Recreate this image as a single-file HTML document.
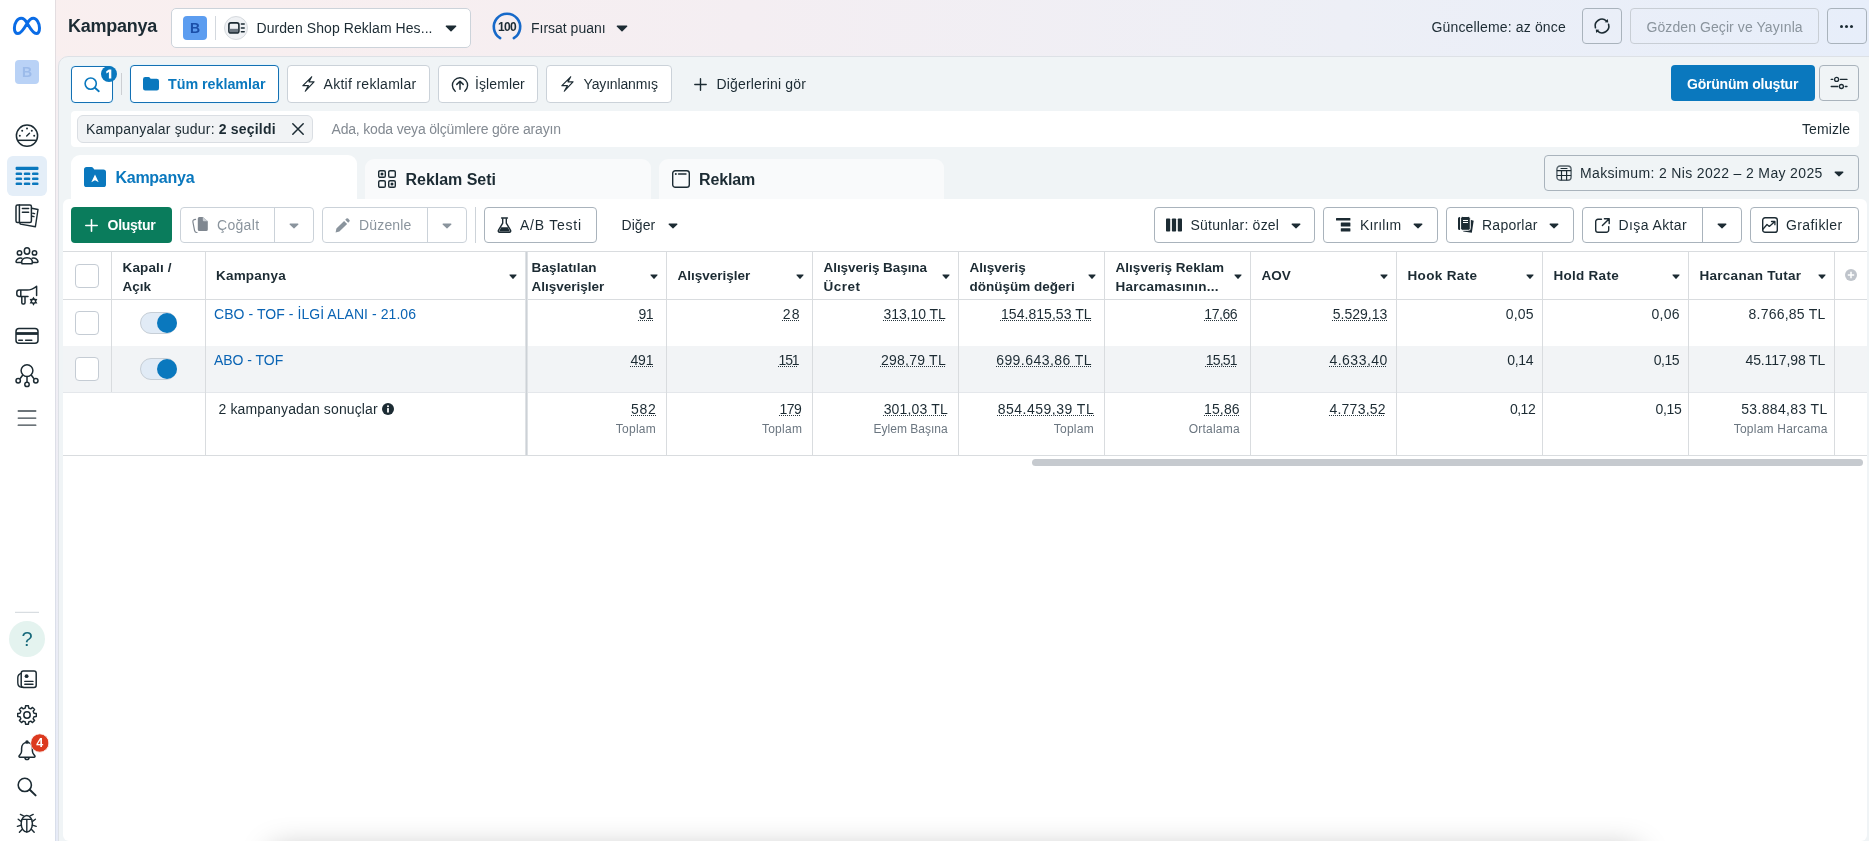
<!DOCTYPE html>
<html lang="tr">
<head>
<meta charset="utf-8">
<title>Kampanya</title>
<style>
*{box-sizing:border-box;margin:0;padding:0}
html,body{width:1869px;height:841px;overflow:hidden}
body{font-family:"Liberation Sans",sans-serif;color:#1c2b33;font-size:14px;position:relative;
background:linear-gradient(90deg,#f9efef 0%,#f8eff0 14%,#f4eef2 40%,#edeff6 72%,#e7eefa 100%)}
.abs{position:absolute}
.t{position:absolute;white-space:nowrap;line-height:1}
.btn{position:absolute;border:1px solid #cbd2d9;border-radius:4px;background:#fff}
svg{position:absolute;overflow:visible}
/* sidebar */
#side{left:0;top:0;width:55px;height:841px;background:#fff}
#sideb{left:55px;top:0;width:1px;height:841px;background:linear-gradient(180deg,#e3dde0,#dcdfe8 60%,#d8deea)}
/* panel */
#panel{left:58px;top:56px;width:1821px;height:800px;background:#f0f4f6;border:1px solid #dde1e6;border-radius:10px 0 0 0}
#card{left:63px;top:199px;width:1804px;height:642px;background:#fff;border-radius:6px}
</style>
</head>
<body>
<div id="w" style="position:absolute;left:0;top:0;width:1869px;height:841px;will-change:transform;overflow:hidden">
<div class="abs" id="side"></div>
<div class="abs" id="sideb"></div>
<div class="abs" style="left:56px;top:56px;width:4px;height:785px;background:linear-gradient(180deg,#f7eff1 0%,#f1eef4 35%,#e7ebf7 100%)"></div>
<div class="abs" id="panel"></div>
<div class="abs" id="card"></div>

<div class="abs" style="left:270px;top:848px;width:1370px;height:40px;border-radius:10px;box-shadow:0 0 30px rgba(0,0,0,.25)"></div>
<!-- TOPBAR -->
<div class="t" id="ttl" style="left:68px;top:17px;font-size:18px;font-weight:bold;color:#1c2b33;letter-spacing:-0.26px">Kampanya</div>
<div class="btn" style="left:171px;top:8px;width:300px;height:40px;border-radius:5px;border-color:#ccd3da"></div>
<div class="abs" style="left:183px;top:16px;width:24px;height:24px;border-radius:4px;background:#5c9df0"></div>
<div class="t" id="tB" style="left:183px;top:21px;width:24px;text-align:center;font-size:14px;font-weight:bold;color:#1b4fa8">B</div>
<div class="abs" style="left:215px;top:16px;width:1px;height:24px;background:#d3d8de"></div>
<div class="abs" style="left:224px;top:16px;width:24px;height:24px;border-radius:12px;background:#eff1f4;border:1px solid #d6dade"></div>
<svg style="left:228px;top:22px" width="17" height="12" viewBox="0 0 17 12"><rect x=".9" y=".9" width="10" height="10" rx="2" fill="none" stroke="#1c2b33" stroke-width="1.6"/><rect x="1.7" y="6.8" width="8.4" height="3.4" fill="#6b7680"/><path d="M13.4 2h2.800M13.4 5.900h2.800M13.4 9.800h2.8" stroke="#1c2b33" stroke-width="1.5" stroke-linecap="round"/></svg>
<div class="t" id="tacc" style="left:256.5px;top:21px;font-size:14px;color:#1c2b33;letter-spacing:0.07px">Durden Shop Reklam Hes...</div>
<svg style="left:445px;top:25px" width="12" height="7" viewBox="0 0 12 7"><path d="M1.2 0.6h9.6a.6.6 0 0 1 .45 1L6.5 6.3a.7.7 0 0 1-1 0L.75 1.6a.6.6 0 0 1 .45-1z" fill="#1c2b33"/></svg>
<svg style="left:492px;top:12px" width="30" height="30" viewBox="0 0 30 30"><path d="M8.2 26.2A13.2 13.2 0 1 1 21.8 26.2" fill="none" stroke="#1669c9" stroke-width="2.6" stroke-linecap="round"/></svg>
<div class="t" id="t100" style="left:492px;top:21px;width:30px;text-align:center;font-size:12px;font-weight:bold;color:#1c2b33;letter-spacing:-0.6px">100</div>
<div class="t" id="tfp" style="left:531px;top:21px;font-size:14px;color:#1c2b33;letter-spacing:-0.01px">Fırsat puanı</div>
<svg style="left:616px;top:25px" width="12" height="7" viewBox="0 0 12 7"><path d="M1.2 0.6h9.6a.6.6 0 0 1 .45 1L6.5 6.3a.7.7 0 0 1-1 0L.75 1.6a.6.6 0 0 1 .45-1z" fill="#1c2b33"/></svg>
<div class="t" id="tupd" style="left:1431.5px;top:19.5px;font-size:14px;color:#1c2b33;letter-spacing:0.15px">Güncelleme: az önce</div>
<div class="btn" style="left:1582px;top:8px;width:40px;height:36px;background:transparent;border-color:#a9b3bc"></div>
<svg style="left:1593.1px;top:16.7px" width="18" height="18" viewBox="0 0 18 18"><path d="M2.43 10.760A6.80 6.80 0 0 1 13.37 3.790M15.57 7.240A6.80 6.80 0 0 1 4.63 14.21" fill="none" stroke="#1c2b33" stroke-width="1.6" stroke-linecap="round"/><path d="M15.20 5.600L14.90 1.90 11.70 5.300zM2.80 12.500L3.10 16.10 6.30 12.700z" fill="#1c2b33"/></svg>
<div class="btn" style="left:1630px;top:8px;width:189px;height:36px;background:transparent;border-color:#c8ced5"></div>
<div class="t" id="tgoz" style="left:1646.5px;top:19.5px;font-size:14px;color:#8a949d;letter-spacing:0.08px">Gözden Geçir ve Yayınla</div>
<div class="btn" style="left:1827px;top:8px;width:40px;height:36px;background:transparent;border-color:#a9b3bc"></div>
<div class="abs" style="left:1840px;top:24.5px;width:3px;height:3px;border-radius:2px;background:#1c2b33;box-shadow:5px 0 0 #1c2b33,10px 0 0 #1c2b33"></div>
<!-- FILTERS -->
<div class="btn" style="left:71px;top:66px;width:42px;height:37px;border:1.3px solid #1470b3;box-shadow:0 0 0 1px #e3f4fc"></div>
<svg style="left:83px;top:75.8px" width="18" height="18" viewBox="0 0 18 18"><circle cx="7.7" cy="7.6" r="5.6" fill="none" stroke="#0a78be" stroke-width="1.6"/><path d="M11.9 11.7L15.8 15.2" stroke="#0a78be" stroke-width="1.9" stroke-linecap="round"/></svg>
<div class="abs" style="left:101px;top:65.8px;width:16px;height:16px;border-radius:8px;background:#0a78be"></div>
<svg style="left:101px;top:65.8px" width="16" height="16" viewBox="0 0 16 16"><path d="M7.9 3.4H10.3V12.6H7.9V5.9L5.3 7.4V5.2Z" fill="#fff"/></svg>
<div class="abs" style="left:121px;top:73px;width:1px;height:22px;background:#cccfd3"></div>
<div class="btn" style="left:130px;top:65px;width:149px;height:38px;border:1.3px solid #1470b3;box-shadow:0 0 0 1px #e3f4fc"></div>
<svg style="left:143px;top:77px" width="16" height="14" viewBox="0 0 16 14"><path d="M0 2.2A2.2 2.2 0 0 1 2.2 0h3.2c.7 0 1.3.3 1.7.9l.5.8h6.2A2.2 2.2 0 0 1 16 3.9v7.4a2.2 2.2 0 0 1-2.2 2.2H2.2A2.2 2.2 0 0 1 0 11.3z" fill="#0a78be"/></svg>
<div class="t" id="ttum" style="left:168px;top:77.2px;font-size:14.3px;font-weight:bold;color:#0a78be;letter-spacing:-0.02px">Tüm reklamlar</div>
<div class="btn" style="left:287px;top:65px;width:143px;height:38px"></div>
<svg style="left:301px;top:76px" width="14" height="16" viewBox="0 0 14 16"><path d="M10.7 .8L1.9 9.7H7.4L4.3 15.2 13 5.8H8z" fill="none" stroke="#1c2b33" stroke-width="1.2" stroke-linejoin="round"/></svg>
<div class="t" id="takt" style="left:323.5px;top:77.3px;font-size:14px;letter-spacing:0.29px">Aktif reklamlar</div>
<div class="btn" style="left:438px;top:65px;width:100px;height:38px"></div>
<svg style="left:451px;top:75.5px" width="18" height="18" viewBox="0 0 18 18"><path d="M4.2 15.2A7.6 7.6 0 1 1 13.8 15.2" fill="none" stroke="#1c2b33" stroke-width="1.4" stroke-linecap="round"/><path d="M9 13.2V5.4M5.8 8.4L9 5.2l3.2 3.2" fill="none" stroke="#1c2b33" stroke-width="1.5" stroke-linecap="round" stroke-linejoin="round"/></svg>
<div class="t" id="tisl" style="left:475px;top:77.3px;font-size:14px;letter-spacing:0.1px">İşlemler</div>
<div class="btn" style="left:546px;top:65px;width:126px;height:38px"></div>
<svg style="left:560px;top:76px" width="14" height="16" viewBox="0 0 14 16"><path d="M10.7 .8L1.9 9.7H7.4L4.3 15.2 13 5.8H8z" fill="none" stroke="#1c2b33" stroke-width="1.2" stroke-linejoin="round"/></svg>
<div class="t" id="tyay" style="left:583.5px;top:77.3px;font-size:14px;letter-spacing:-0.15px">Yayınlanmış</div>
<svg style="left:694px;top:77.7px" width="13" height="13" viewBox="0 0 13 13"><path d="M6.5 0.8v11.4M0.8 6.5h11.4" stroke="#1c2b33" stroke-width="1.4" stroke-linecap="round"/></svg>
<div class="t" id="tdig" style="left:716.5px;top:77.3px;font-size:14px;letter-spacing:0.16px">Diğerlerini gör</div>
<div class="abs" style="left:1671px;top:65px;width:144px;height:36px;border-radius:4px;background:#0a78be"></div>
<div class="t" id="tgor" style="left:1687px;top:76.6px;font-size:14px;font-weight:bold;color:#fff;letter-spacing:-0.21px">Görünüm oluştur</div>
<div class="btn" style="left:1819px;top:65px;width:40px;height:36px;background:transparent;border-color:#a9b3bc"></div>
<svg style="left:1829px;top:73px" width="20" height="20" viewBox="0 0 20 20"><g fill="none" stroke="#1c2b33" stroke-width="1.3" stroke-linecap="round"><path d="M2.2 6.400h1.600M11.4 6.400H18M2.2 13.500H8.800M16.2 13.500H18"/><circle cx="7.6" cy="6.4" r="2"/><circle cx="12.4" cy="13.5" r="2"/></g></svg>
<!-- SEARCH -->
<div class="abs" style="left:71px;top:111px;width:1788px;height:36px;background:#fff;border-radius:4px"></div>
<div class="abs" style="left:77px;top:115px;width:236px;height:28px;background:#f1f3f5;border:1px solid #dadee3;border-radius:6px"></div>
<div class="t" id="tchip" style="left:86px;top:122.3px;font-size:14px;letter-spacing:0.19px">Kampanyalar şudur: <b>2 seçildi</b></div>
<svg style="left:292px;top:123px" width="12" height="12" viewBox="0 0 12 12"><path d="M0.8 0.8l10.4 10.4M11.2 0.8L0.8 11.2" stroke="#1c2b33" stroke-width="1.5" stroke-linecap="round"/></svg>
<div class="t" id="tph" style="left:331.5px;top:122.3px;font-size:14px;color:#838a92;letter-spacing:-0.18px">Ada, koda veya ölçümlere göre arayın</div>
<div class="t" id="ttem" style="left:1802px;top:122.3px;font-size:14px;letter-spacing:0.11px">Temizle</div>
<!-- TABS -->
<div class="abs" style="left:71px;top:155px;width:286px;height:50px;background:#fff;border-radius:9px 9px 0 0"></div>
<div class="abs" style="left:365px;top:159px;width:286px;height:40px;background:#f9fafb;border-radius:9px 9px 0 0"></div>
<div class="abs" style="left:659px;top:159px;width:285px;height:40px;background:#f9fafb;border-radius:9px 9px 0 0"></div>
<svg style="left:84px;top:167px" width="22" height="20" viewBox="0 0 22 20"><path d="M0 2.6A2.6 2.6 0 0 1 2.6 0h4.6c.9 0 1.7.4 2.2 1.2l.9 1.3h9.1A2.6 2.6 0 0 1 22 5.1v12.3a2.6 2.6 0 0 1-2.6 2.6H2.6A2.6 2.6 0 0 1 0 17.400z" fill="#0a78be"/><path d="M11 7.400l3.7 7.8-3.7-1.9-3.7 1.900z" fill="#fff"/></svg>
<div class="t" id="tk1" style="left:115.5px;top:169.8px;font-size:16px;font-weight:bold;color:#0a78be;letter-spacing:-0.27px">Kampanya</div>
<svg style="left:378px;top:170px" width="18" height="18" viewBox="0 0 18 18"><g fill="none" stroke="#1c2b33" stroke-width="1.4"><rect x=".7" y=".7" width="6.6" height="6.6" rx="1.4"/><rect x="10.7" y=".7" width="6.6" height="6.6" rx="1.4"/><rect x=".7" y="10.7" width="6.6" height="6.6" rx="1.4"/><rect x="10.7" y="10.7" width="6.6" height="6.6" rx="1.4"/></g><circle cx="4" cy="4" r="1.5" fill="#1c2b33"/><circle cx="14" cy="14" r="1.5" fill="#1c2b33"/></svg>
<div class="t" id="tk2" style="left:405.5px;top:171.8px;font-size:16px;font-weight:bold;letter-spacing:-0.03px">Reklam Seti</div>
<svg style="left:672px;top:170px" width="18" height="18" viewBox="0 0 18 18"><rect x=".7" y=".7" width="16.6" height="16.6" rx="2.6" fill="none" stroke="#1c2b33" stroke-width="1.4"/><circle cx="3.8" cy="4" r="1" fill="#1c2b33"/><path d="M6.5 4h7.5" stroke="#1c2b33" stroke-width="1.4" stroke-linecap="round"/></svg>
<div class="t" id="tk3" style="left:699px;top:171.8px;font-size:16px;font-weight:bold;letter-spacing:-0.14px">Reklam</div>
<div class="btn" style="left:1544px;top:155px;width:315px;height:36px;background:transparent;border-color:#a9b3bc"></div>
<svg style="left:1556px;top:165px" width="16" height="16" viewBox="0 0 16 16"><rect x=".9" y="1" width="14.2" height="14.2" rx="3.2" fill="none" stroke="#55626a" stroke-width="1.4"/><path d="M5 3.500h6" stroke="#1c2b33" stroke-width="1.2" stroke-linecap="round"/><path d="M.9 5.600h14.200M.9 10.500h14.200M5.5 5.600v9.600M10.6 5.600v9.6" stroke="#1c2b33" stroke-width="1.2"/></svg>
<div class="t" id="tdate" style="left:1580px;top:166.2px;font-size:14px;letter-spacing:0.35px">Maksimum: 2 Nis 2022 – 2 May 2025</div>
<svg style="left:1834px;top:170.5px" width="10" height="6" viewBox="0 0 12 7"><path d="M1.2 0.6h9.6a.6.6 0 0 1 .45 1L6.5 6.3a.7.7 0 0 1-1 0L.75 1.6a.6.6 0 0 1 .45-1z" fill="#1c2b33"/></svg>
<!-- TOOLBAR -->
<div class="abs" style="left:71px;top:207px;width:101px;height:36px;border-radius:4px;background:#0a7c5c"></div>
<svg style="left:85px;top:219px" width="13" height="13" viewBox="0 0 13 13"><path d="M6.5 0.8v11.400M0.8 6.5h11.4" stroke="#fff" stroke-width="1.6" stroke-linecap="round"/></svg>
<div class="t" id="tol" style="left:107.5px;top:218px;font-size:14px;font-weight:bold;color:#fff;letter-spacing:-0.25px">Oluştur</div>
<div class="btn" style="left:180px;top:207px;width:134px;height:36px"></div>
<div class="abs" style="left:274px;top:208px;width:1px;height:34px;background:#cbd2d9"></div>
<svg style="left:192px;top:217px" width="17" height="16" viewBox="0 0 17 16"><path d="M7.3 0h3.500L15.8 4.200V12.400a1.5 1.5 0 0 1-1.5 1.500H7.300a1.5 1.5 0 0 1-1.5-1.500V1.500A1.5 1.5 0 0 1 7.3 0z" fill="#7f8790"/><path d="M10.8 0L15.8 4.200H11.800a1 1 0 0 1-1-1z" fill="#c9ced3"/><path d="M3.6 2.400C1.6 2.6.6 3.4.9 5l1.7 8.600c.3 1.4 1.2 2 2.4 1.9" fill="none" stroke="#7f8790" stroke-width="1.2" stroke-linecap="round"/></svg>
<div class="t" id="tcog" style="left:217px;top:218px;font-size:14px;color:#8a949d;letter-spacing:0.31px">Çoğalt</div>
<svg style="left:289px;top:222.5px" width="10" height="6" viewBox="0 0 12 7"><path d="M1.2 0.6h9.6a.6.6 0 0 1 .45 1L6.5 6.3a.7.7 0 0 1-1 0L.75 1.6a.6.6 0 0 1 .45-1z" fill="#8a949d"/></svg>
<div class="btn" style="left:322px;top:207px;width:145px;height:36px"></div>
<div class="abs" style="left:427px;top:208px;width:1px;height:34px;background:#cbd2d9"></div>
<svg style="left:335px;top:218px" width="15" height="15" viewBox="0 0 15 15"><path d="M0.6 14.400l.8-3.8 7.7-7.7 3 3-7.7 7.700zM10.2 1.800l1.2-1.200a1.2 1.2 0 0 1 1.7 0l1.3 1.300a1.2 1.2 0 0 1 0 1.700l-1.2 1.200z" fill="#8a949d"/></svg>
<div class="t" id="tduz" style="left:359px;top:218px;font-size:14px;color:#8a949d;letter-spacing:0.17px">Düzenle</div>
<svg style="left:442px;top:222.5px" width="10" height="6" viewBox="0 0 12 7"><path d="M1.2 0.6h9.6a.6.6 0 0 1 .45 1L6.5 6.3a.7.7 0 0 1-1 0L.75 1.6a.6.6 0 0 1 .45-1z" fill="#8a949d"/></svg>
<div class="abs" style="left:475px;top:207px;width:1px;height:36px;background:#cdd3d9"></div>
<div class="btn" style="left:484px;top:207px;width:113px;height:36px;border-color:#a9b3bc"></div>
<svg style="left:497px;top:217px" width="15" height="16" viewBox="0 0 15 16"><path d="M4.6 1h5.8" stroke="#1c2b33" stroke-width="1.5" stroke-linecap="round"/><path d="M5.7 1.200v5L1.4 13.400A1.3 1.3 0 0 0 2.5 15.300h10a1.3 1.3 0 0 0 1.1-1.900L9.3 6.200v-5" fill="none" stroke="#1c2b33" stroke-width="1.4" stroke-linejoin="round"/><path d="M4.2 10.200h6.600l2.2 4.300H2z" fill="#1c2b33"/></svg>
<div class="t" id="tab" style="left:520px;top:218px;font-size:14px;letter-spacing:0.75px">A/B Testi</div>
<div class="t" id="tdgr" style="left:621.5px;top:218px;font-size:14px;letter-spacing:0.06px">Diğer</div>
<svg style="left:667.5px;top:222.5px" width="10" height="6" viewBox="0 0 12 7"><path d="M1.2 0.6h9.6a.6.6 0 0 1 .45 1L6.5 6.3a.7.7 0 0 1-1 0L.75 1.6a.6.6 0 0 1 .45-1z" fill="#1c2b33"/></svg>
<div class="btn" style="left:1154px;top:207px;width:161px;height:36px;border-color:#a9b3bc"></div>
<svg style="left:1166px;top:218px" width="16" height="14" viewBox="0 0 16 14"><rect x="0" y="0.5" width="4.2" height="13" rx=".8" fill="#1c2b33"/><rect x="5.9" y="0.5" width="4.2" height="13" rx=".8" fill="#1c2b33"/><rect x="11.8" y="0.5" width="4.2" height="13" rx=".8" fill="#1c2b33"/></svg>
<div class="t" id="tsut" style="left:1190.5px;top:218px;font-size:14px;letter-spacing:0.22px">Sütunlar: özel</div>
<svg style="left:1290.5px;top:222.5px" width="10" height="6" viewBox="0 0 12 7"><path d="M1.2 0.6h9.6a.6.6 0 0 1 .45 1L6.5 6.3a.7.7 0 0 1-1 0L.75 1.6a.6.6 0 0 1 .45-1z" fill="#1c2b33"/></svg>
<div class="btn" style="left:1323px;top:207px;width:115px;height:36px;border-color:#a9b3bc"></div>
<svg style="left:1336px;top:218.3px" width="15" height="14" viewBox="0 0 15 14"><rect x="0" y="0" width="14.4" height="2.6" rx=".5" fill="#1c2b33"/><rect x="4.8" y="4.4" width="9.6" height="4.2" rx=".5" fill="#1c2b33"/><rect x="4.8" y="10.2" width="9.6" height="3.3" rx=".5" fill="#1c2b33"/></svg>
<div class="t" id="tkir" style="left:1360px;top:218px;font-size:14px;letter-spacing:0.12px">Kırılım</div>
<svg style="left:1413px;top:222.5px" width="10" height="6" viewBox="0 0 12 7"><path d="M1.2 0.6h9.6a.6.6 0 0 1 .45 1L6.5 6.3a.7.7 0 0 1-1 0L.75 1.6a.6.6 0 0 1 .45-1z" fill="#1c2b33"/></svg>
<div class="btn" style="left:1446px;top:207px;width:128px;height:36px;border-color:#a9b3bc"></div>
<svg style="left:1458px;top:217px" width="16" height="16" viewBox="0 0 16 16"><path d="M12.4 2.800L15.7 3.7 13.8 15.8 5.2 14.4 5.6 11z" fill="#1c2b33"/><rect x="2.6" y="-.5" width="9.7" height="13.8" rx="1.8" fill="#1c2b33" stroke="#fff" stroke-width="1"/><path d="M2 0v13H1.600A1.6 1.6 0 0 1 0 11.400V1.600A1.6 1.6 0 0 1 1.6 0z" fill="#1c2b33"/><path d="M5 3.500h5M5 5.500h5" stroke="#fff" stroke-width="1"/></svg>
<div class="t" id="trap" style="left:1482px;top:218px;font-size:14px;letter-spacing:0.24px">Raporlar</div>
<svg style="left:1549px;top:222.5px" width="10" height="6" viewBox="0 0 12 7"><path d="M1.2 0.6h9.6a.6.6 0 0 1 .45 1L6.5 6.3a.7.7 0 0 1-1 0L.75 1.6a.6.6 0 0 1 .45-1z" fill="#1c2b33"/></svg>
<div class="btn" style="left:1582px;top:207px;width:160px;height:36px;border-color:#a9b3bc"></div>
<div class="abs" style="left:1702px;top:208px;width:1px;height:34px;background:#a9b3bc"></div>
<svg style="left:1595px;top:218px" width="15" height="15" viewBox="0 0 15 15"><path d="M6.5 1.300H3A2.3 2.3 0 0 0 .7 3.600V12A2.3 2.3 0 0 0 3 14.300h8.400a2.3 2.3 0 0 0 2.3-2.300V8.6" fill="none" stroke="#1c2b33" stroke-width="1.4" stroke-linecap="round"/><path d="M9.4.8h4.800v4.800M14 1L7.4 7.6" fill="none" stroke="#1c2b33" stroke-width="1.4" stroke-linecap="round" stroke-linejoin="round"/></svg>
<div class="t" id="tdis" style="left:1618.5px;top:218px;font-size:14px;letter-spacing:0.4px">Dışa Aktar</div>
<svg style="left:1717px;top:222.5px" width="10" height="6" viewBox="0 0 12 7"><path d="M1.2 0.6h9.6a.6.6 0 0 1 .45 1L6.5 6.3a.7.7 0 0 1-1 0L.75 1.6a.6.6 0 0 1 .45-1z" fill="#1c2b33"/></svg>
<div class="btn" style="left:1750px;top:207px;width:109px;height:36px;border-color:#a9b3bc"></div>
<svg style="left:1762px;top:217px" width="16" height="16" viewBox="0 0 16 16"><rect x=".7" y=".7" width="14.6" height="14.6" rx="2.4" fill="none" stroke="#1c2b33" stroke-width="1.4"/><path d="M.9 12.200L5 7.5 7.3 9.4 12.6 4.800M9.5 4.500h3.400v3.2" fill="none" stroke="#1c2b33" stroke-width="1.3" stroke-linecap="round" stroke-linejoin="round"/></svg>
<div class="t" id="tgra" style="left:1786px;top:218px;font-size:14px;letter-spacing:0.41px">Grafikler</div>
<!-- TABLE -->
<div class="abs" style="left:63px;top:346px;width:1804px;height:47px;background:#f2f4f6"></div>
<div class="abs" style="left:63px;top:251px;width:1804px;height:1px;background:#d9dcdf"></div>
<div class="abs" style="left:63px;top:299px;width:1804px;height:1px;background:#d9dcdf"></div>
<div class="abs" style="left:63px;top:455px;width:1804px;height:1px;background:#d9dcdf"></div>
<div class="abs" style="left:63px;top:392px;width:1804px;height:1px;background:#e4e7eb"></div>
<div class="abs" style="left:111px;top:252px;width:1px;height:140px;background:#d9dcdf"></div>
<div class="abs" style="left:205px;top:252px;width:1px;height:203px;background:#d9dcdf"></div>
<div class="abs" style="left:525px;top:252px;width:3px;height:203px;background:linear-gradient(90deg,#eceef0,#ccd1d6 40%,#ccd1d6 60%,#eceef0)"></div>
<div class="abs" style="left:666px;top:252px;width:1px;height:203px;background:#d9dcdf"></div>
<div class="abs" style="left:812px;top:252px;width:1px;height:203px;background:#d9dcdf"></div>
<div class="abs" style="left:958px;top:252px;width:1px;height:203px;background:#d9dcdf"></div>
<div class="abs" style="left:1104px;top:252px;width:1px;height:203px;background:#d9dcdf"></div>
<div class="abs" style="left:1250px;top:252px;width:1px;height:203px;background:#d9dcdf"></div>
<div class="abs" style="left:1396px;top:252px;width:1px;height:203px;background:#d9dcdf"></div>
<div class="abs" style="left:1542px;top:252px;width:1px;height:203px;background:#d9dcdf"></div>
<div class="abs" style="left:1688px;top:252px;width:1px;height:203px;background:#d9dcdf"></div>
<div class="abs" style="left:1834px;top:252px;width:1px;height:203px;background:#d9dcdf"></div>
<div class="abs" style="left:75px;top:264px;width:24px;height:24px;border:1px solid #c5ccd4;border-radius:4px;background:#fff"></div>
<div class="abs" style="left:75px;top:311px;width:24px;height:24px;border:1px solid #c5ccd4;border-radius:4px;background:#fff"></div>
<div class="abs" style="left:75px;top:357px;width:24px;height:24px;border:1px solid #c5ccd4;border-radius:4px;background:#fff"></div>
<div class="abs" style="left:140px;top:312px;width:37px;height:22px;border-radius:11px;background:#e1ebf6;border:1px solid #c6ced6"></div>
<div class="abs" style="left:157px;top:313px;width:20px;height:20px;border-radius:10px;background:#0a78be"></div>
<div class="abs" style="left:140px;top:358px;width:37px;height:22px;border-radius:11px;background:#e1ebf6;border:1px solid #c6ced6"></div>
<div class="abs" style="left:157px;top:359px;width:20px;height:20px;border-radius:10px;background:#0a78be"></div>
<div class="t" id="h0a" style="left:122.5px;top:260.8px;font-size:13.5px;font-weight:bold;letter-spacing:0.14px">Kapalı /</div>
<div class="t" id="h0b" style="left:122.5px;top:279.5px;font-size:13.5px;font-weight:bold">Açık</div>
<div class="t" id="h1" style="left:216px;top:269.2px;font-size:13.5px;font-weight:bold;letter-spacing:0.2px">Kampanya</div>
<svg style="left:509px;top:274px" width="8" height="5.4" viewBox="0 0 12 7" preserveAspectRatio="none"><path d="M1.2 0.6h9.6a.6.6 0 0 1 .45 1L6.5 6.3a.7.7 0 0 1-1 0L.75 1.6a.6.6 0 0 1 .45-1z" fill="#1c2b33"/></svg>
<div class="t" id="c0a" style="left:531.5px;top:260.8px;font-size:13.5px;font-weight:bold;letter-spacing:0.14px">Başlatılan</div>
<div class="t" id="c0b" style="left:531.5px;top:279.5px;font-size:13.5px;font-weight:bold;letter-spacing:-0.01px">Alışverişler</div>
<svg style="left:649.5px;top:274px" width="8" height="5.4" viewBox="0 0 12 7" preserveAspectRatio="none"><path d="M1.2 0.6h9.6a.6.6 0 0 1 .45 1L6.5 6.3a.7.7 0 0 1-1 0L.75 1.6a.6.6 0 0 1 .45-1z" fill="#1c2b33"/></svg>
<div class="t" id="c1a" style="left:677.5px;top:269.2px;font-size:13.5px;font-weight:bold;letter-spacing:-0.01px">Alışverişler</div>
<svg style="left:795.5px;top:274px" width="8" height="5.4" viewBox="0 0 12 7" preserveAspectRatio="none"><path d="M1.2 0.6h9.6a.6.6 0 0 1 .45 1L6.5 6.3a.7.7 0 0 1-1 0L.75 1.6a.6.6 0 0 1 .45-1z" fill="#1c2b33"/></svg>
<div class="t" id="c2a" style="left:823.5px;top:260.8px;font-size:13.5px;font-weight:bold;letter-spacing:-0.05px">Alışveriş Başına</div>
<div class="t" id="c2b" style="left:823.5px;top:279.5px;font-size:13.5px;font-weight:bold;letter-spacing:0.52px">Ücret</div>
<svg style="left:941.5px;top:274px" width="8" height="5.4" viewBox="0 0 12 7" preserveAspectRatio="none"><path d="M1.2 0.6h9.6a.6.6 0 0 1 .45 1L6.5 6.3a.7.7 0 0 1-1 0L.75 1.6a.6.6 0 0 1 .45-1z" fill="#1c2b33"/></svg>
<div class="t" id="c3a" style="left:969.5px;top:260.8px;font-size:13.5px;font-weight:bold;letter-spacing:-0.01px">Alışveriş</div>
<div class="t" id="c3b" style="left:969.5px;top:279.5px;font-size:13.5px;font-weight:bold;letter-spacing:0.01px">dönüşüm değeri</div>
<svg style="left:1087.5px;top:274px" width="8" height="5.4" viewBox="0 0 12 7" preserveAspectRatio="none"><path d="M1.2 0.6h9.6a.6.6 0 0 1 .45 1L6.5 6.3a.7.7 0 0 1-1 0L.75 1.6a.6.6 0 0 1 .45-1z" fill="#1c2b33"/></svg>
<div class="t" id="c4a" style="left:1115.5px;top:260.8px;font-size:13.5px;font-weight:bold;letter-spacing:0.03px">Alışveriş Reklam</div>
<div class="t" id="c4b" style="left:1115.5px;top:279.5px;font-size:13.5px;font-weight:bold;letter-spacing:0.23px">Harcamasının...</div>
<svg style="left:1233.5px;top:274px" width="8" height="5.4" viewBox="0 0 12 7" preserveAspectRatio="none"><path d="M1.2 0.6h9.6a.6.6 0 0 1 .45 1L6.5 6.3a.7.7 0 0 1-1 0L.75 1.6a.6.6 0 0 1 .45-1z" fill="#1c2b33"/></svg>
<div class="t" id="c5a" style="left:1261.5px;top:269.2px;font-size:13.5px;font-weight:bold;letter-spacing:-0.03px">AOV</div>
<svg style="left:1379.5px;top:274px" width="8" height="5.4" viewBox="0 0 12 7" preserveAspectRatio="none"><path d="M1.2 0.6h9.6a.6.6 0 0 1 .45 1L6.5 6.3a.7.7 0 0 1-1 0L.75 1.6a.6.6 0 0 1 .45-1z" fill="#1c2b33"/></svg>
<div class="t" id="c6a" style="left:1407.5px;top:269.2px;font-size:13.5px;font-weight:bold;letter-spacing:0.35px">Hook Rate</div>
<svg style="left:1525.5px;top:274px" width="8" height="5.4" viewBox="0 0 12 7" preserveAspectRatio="none"><path d="M1.2 0.6h9.6a.6.6 0 0 1 .45 1L6.5 6.3a.7.7 0 0 1-1 0L.75 1.6a.6.6 0 0 1 .45-1z" fill="#1c2b33"/></svg>
<div class="t" id="c7a" style="left:1553.5px;top:269.2px;font-size:13.5px;font-weight:bold;letter-spacing:0.27px">Hold Rate</div>
<svg style="left:1671.5px;top:274px" width="8" height="5.4" viewBox="0 0 12 7" preserveAspectRatio="none"><path d="M1.2 0.6h9.6a.6.6 0 0 1 .45 1L6.5 6.3a.7.7 0 0 1-1 0L.75 1.6a.6.6 0 0 1 .45-1z" fill="#1c2b33"/></svg>
<div class="t" id="c8a" style="left:1699.5px;top:269.2px;font-size:13.5px;font-weight:bold;letter-spacing:0.27px">Harcanan Tutar</div>
<svg style="left:1817.5px;top:274px" width="8" height="5.4" viewBox="0 0 12 7" preserveAspectRatio="none"><path d="M1.2 0.6h9.6a.6.6 0 0 1 .45 1L6.5 6.3a.7.7 0 0 1-1 0L.75 1.6a.6.6 0 0 1 .45-1z" fill="#1c2b33"/></svg>
<svg style="left:1845px;top:269.2px" width="12" height="12" viewBox="0 0 12 12"><circle cx="6" cy="6" r="6" fill="#bfc4cb"/><path d="M6 2.8v6.400M2.8 6h6.4" stroke="#fff" stroke-width="1.5"/></svg>
<div class="t" id="n1" style="left:214px;top:307.3px;font-size:14px;color:#0a64b4;letter-spacing:0.06px">CBO - TOF - İLGİ ALANI - 21.06</div>
<div class="t" id="n2" style="left:214px;top:353.4px;font-size:14px;color:#0a64b4;letter-spacing:-0.03px">ABO - TOF</div>
<div class="t" id="n3" style="left:218.5px;top:402.1px;font-size:14px;letter-spacing:0.13px">2 kampanyadan sonuçlar</div>
<svg style="left:382px;top:403px" width="12" height="12" viewBox="0 0 12 12"><circle cx="6" cy="6" r="6" fill="#1c2b33"/><circle cx="6" cy="3.3" r="1" fill="#fff"/><rect x="5.1" y="5.1" width="1.8" height="4.4" fill="#fff"/></svg>
<div class="t" id="v0a" style="right:1215.4px;top:307.3px;font-size:14px;text-decoration:underline dotted #27353d;text-decoration-thickness:1.25px;text-underline-offset:1.2px;letter-spacing:-0.58px;margin-right:0.58px">91</div>
<div class="t" id="v0b" style="right:1215.4px;top:353.4px;font-size:14px;text-decoration:underline dotted #27353d;text-decoration-thickness:1.25px;text-underline-offset:1.2px;letter-spacing:-0.08px;margin-right:0.08px">491</div>
<div class="t" id="v0c" style="right:1213.2px;top:402.1px;font-size:14px;text-decoration:underline dotted #27353d;text-decoration-thickness:1.25px;text-underline-offset:1.2px;letter-spacing:0.67px;margin-right:-0.67px">582</div>
<div class="t" id="v0d" style="right:1213.2px;top:422.6px;font-size:12px;color:#6b7680;letter-spacing:0.26px;margin-right:-0.26px">Toplam</div>
<div class="t" id="v1a" style="right:1069.4px;top:307.3px;font-size:14px;text-decoration:underline dotted #27353d;text-decoration-thickness:1.25px;text-underline-offset:1.2px;letter-spacing:1.32px;margin-right:-1.32px">28</div>
<div class="t" id="v1b" style="right:1069.4px;top:353.4px;font-size:14px;text-decoration:underline dotted #27353d;text-decoration-thickness:1.25px;text-underline-offset:1.2px;letter-spacing:-1.18px;margin-right:1.18px">151</div>
<div class="t" id="v1c" style="right:1067.1px;top:402.1px;font-size:14px;text-decoration:underline dotted #27353d;text-decoration-thickness:1.25px;text-underline-offset:1.2px;letter-spacing:-0.43px;margin-right:0.43px">179</div>
<div class="t" id="v1d" style="right:1067.1px;top:422.6px;font-size:12px;color:#6b7680;letter-spacing:0.26px;margin-right:-0.26px">Toplam</div>
<div class="t" id="v2a" style="right:923.3px;top:307.3px;font-size:14px;text-decoration:underline dotted #27353d;text-decoration-thickness:1.25px;text-underline-offset:1.2px;letter-spacing:-0.07px;margin-right:0.07px">313,10 TL</div>
<div class="t" id="v2b" style="right:923.3px;top:353.4px;font-size:14px;text-decoration:underline dotted #27353d;text-decoration-thickness:1.25px;text-underline-offset:1.2px;letter-spacing:0.25px;margin-right:-0.25px">298,79 TL</div>
<div class="t" id="v2c" style="right:921.3px;top:402.1px;font-size:14px;text-decoration:underline dotted #27353d;text-decoration-thickness:1.25px;text-underline-offset:1.2px;letter-spacing:0.15px;margin-right:-0.15px">301,03 TL</div>
<div class="t" id="v2d" style="right:921.3px;top:422.6px;font-size:12px;color:#6b7680;letter-spacing:0.01px;margin-right:-0.01px">Eylem Başına</div>
<div class="t" id="v3a" style="right:777.4px;top:307.3px;font-size:14px;text-decoration:underline dotted #27353d;text-decoration-thickness:1.25px;text-underline-offset:1.2px;letter-spacing:0.05px;margin-right:-0.05px">154.815,53 TL</div>
<div class="t" id="v3b" style="right:777.4px;top:353.4px;font-size:14px;text-decoration:underline dotted #27353d;text-decoration-thickness:1.25px;text-underline-offset:1.2px;letter-spacing:0.45px;margin-right:-0.45px">699.643,86 TL</div>
<div class="t" id="v3c" style="right:775.3px;top:402.1px;font-size:14px;text-decoration:underline dotted #27353d;text-decoration-thickness:1.25px;text-underline-offset:1.2px;letter-spacing:0.49px;margin-right:-0.49px">854.459,39 TL</div>
<div class="t" id="v3d" style="right:775.3px;top:422.6px;font-size:12px;color:#6b7680;letter-spacing:0.26px;margin-right:-0.26px">Toplam</div>
<div class="t" id="v4a" style="right:631.4px;top:307.3px;font-size:14px;text-decoration:underline dotted #27353d;text-decoration-thickness:1.25px;text-underline-offset:1.2px;letter-spacing:-0.44px;margin-right:0.44px">17,66</div>
<div class="t" id="v4b" style="right:631.4px;top:353.4px;font-size:14px;text-decoration:underline dotted #27353d;text-decoration-thickness:1.25px;text-underline-offset:1.2px;letter-spacing:-0.81px;margin-right:0.81px">15,51</div>
<div class="t" id="v4c" style="right:629.4px;top:402.1px;font-size:14px;text-decoration:underline dotted #27353d;text-decoration-thickness:1.25px;text-underline-offset:1.2px;letter-spacing:0.14px;margin-right:-0.14px">15,86</div>
<div class="t" id="v4d" style="right:629.4px;top:422.6px;font-size:12px;color:#6b7680;letter-spacing:0.22px;margin-right:-0.22px">Ortalama</div>
<div class="t" id="v5a" style="right:481.6px;top:307.3px;font-size:14px;text-decoration:underline dotted #27353d;text-decoration-thickness:1.25px;text-underline-offset:1.2px;letter-spacing:0.03px;margin-right:-0.03px">5.529,13</div>
<div class="t" id="v5b" style="right:481.6px;top:353.4px;font-size:14px;text-decoration:underline dotted #27353d;text-decoration-thickness:1.25px;text-underline-offset:1.2px;letter-spacing:0.5px;margin-right:-0.5px">4.633,40</div>
<div class="t" id="v5c" style="right:483.4px;top:402.1px;font-size:14px;text-decoration:underline dotted #27353d;text-decoration-thickness:1.25px;text-underline-offset:1.2px;letter-spacing:0.24px;margin-right:-0.24px">4.773,52</div>
<div class="t" id="v6a" style="right:335.5px;top:307.3px;font-size:14px;letter-spacing:0.15px;margin-right:-0.15px">0,05</div>
<div class="t" id="v6b" style="right:335.5px;top:353.4px;font-size:14px;letter-spacing:-0.35px;margin-right:0.35px">0,14</div>
<div class="t" id="v6c" style="right:333.3px;top:402.1px;font-size:14px;letter-spacing:-0.48px;margin-right:0.48px">0,12</div>
<div class="t" id="v7a" style="right:189.5px;top:307.3px;font-size:14px;letter-spacing:0.28px;margin-right:-0.28px">0,06</div>
<div class="t" id="v7b" style="right:189.5px;top:353.4px;font-size:14px;letter-spacing:-0.48px;margin-right:0.48px">0,15</div>
<div class="t" id="v7c" style="right:187.3px;top:402.1px;font-size:14px;letter-spacing:-0.35px;margin-right:0.35px">0,15</div>
<div class="t" id="v8a" style="right:43.7px;top:307.3px;font-size:14px;letter-spacing:0.23px;margin-right:-0.23px">8.766,85 TL</div>
<div class="t" id="v8b" style="right:43.7px;top:353.4px;font-size:14px;letter-spacing:-0.13px;margin-right:0.13px">45.117,98 TL</div>
<div class="t" id="v8c" style="right:41.7px;top:402.1px;font-size:14px;letter-spacing:0.35px;margin-right:-0.35px">53.884,83 TL</div>
<div class="t" id="v8d" style="right:41.7px;top:422.6px;font-size:12px;color:#6b7680;letter-spacing:0.22px;margin-right:-0.22px">Toplam Harcama</div>
<div class="abs" style="left:1032px;top:459px;width:831px;height:7px;border-radius:4px;background:#c6cacf"></div>
<!-- SIDEBAR ICONS -->
<div class="abs" style="left:7px;top:156px;width:40px;height:40px;border-radius:6px;background:#e4eef8"></div>
<div class="abs" style="left:15px;top:60px;width:24px;height:24px;border-radius:4px;background:#b9d2f6"></div>
<div class="t" id="sB" style="left:15px;top:65px;width:24px;text-align:center;font-size:14px;font-weight:bold;color:#9cbbea">B</div>
<div class="abs" style="left:9px;top:621px;width:36px;height:36px;border-radius:18px;background:#e4f3ef"></div>
<div class="t" id="sQ" style="left:9px;top:629px;width:36px;text-align:center;font-size:20px;color:#17697a">?</div>
<svg style="left:0;top:0" width="56" height="841" viewBox="0 0 56 841" fill="none" stroke="#1c2b33" stroke-width="1.5" stroke-linecap="round" stroke-linejoin="round">
<!-- meta -->
<path d="M27.2 23.3C24.5 28 21.5 33.6 18 33.6C15.5 33.6 14.4 31 14.4 28C14.4 23 17.5 18.2 21.1 18.2C24 18.2 26 21 27.2 23.3C30 28 33 33.6 36.3 33.6C38.5 33.6 39.5 31 39.5 28C39.5 23 36.5 18.2 33.3 18.2C30.5 18.2 28.5 21 27.2 23.3Z" stroke="#0a6ce6" stroke-width="3"/>
<!-- gauge -->
<circle cx="27" cy="135.7" r="10.6"/><path d="M17.4 140.3h19.2" stroke-linecap="butt"/><path d="M26.7 136l2.8-2.8" stroke-width="1.4"/>
<g fill="#1c2b33" stroke="none"><circle cx="19.8" cy="135.8" r="1"/><circle cx="22.2" cy="130.8" r="1"/><circle cx="27" cy="128.6" r="1"/><circle cx="31.8" cy="130.8" r="1"/><circle cx="34.2" cy="135.8" r="1"/></g>
<!-- table -->
<g fill="#0a78be" stroke="none"><rect x="15.6" y="166.8" width="22.9" height="3.3" rx="1"/>
<rect x="15.6" y="172.4" width="6.5" height="2.7" rx="1.2"/><rect x="23.8" y="172.4" width="6.5" height="2.7" rx="1.2"/><rect x="32" y="172.4" width="6.5" height="2.7" rx="1.2"/>
<rect x="15.6" y="177.4" width="6.5" height="2.7" rx="1.2"/><rect x="23.8" y="177.4" width="6.5" height="2.7" rx="1.2"/><rect x="32" y="177.4" width="6.5" height="2.7" rx="1.2"/>
<rect x="15.6" y="182.4" width="6.5" height="2.7" rx="1.2"/><rect x="23.8" y="182.4" width="6.5" height="2.7" rx="1.2"/><rect x="32" y="182.4" width="6.5" height="2.7" rx="1.2"/></g>
<!-- docs -->
<rect x="16" y="205" width="15.4" height="17.4" rx="1.5"/><path d="M19.4 205v17.400M22.4 208.400h6.200M22.4 212.200h6.2"/><path d="M31.6 208.300l6.4 1.2-2.6 17.2-15-2.6-.8-1.600M32.8 213.300l1.8.3M32.4 216.300l1.6.3" stroke-width="1.4"/>
<!-- people -->
<ellipse cx="27" cy="251" rx="2.7" ry="3.2"/><circle cx="19.5" cy="252.9" r="2.2"/><circle cx="34.5" cy="252.9" r="2.2"/>
<path d="M21.8 263.200c-.8-3.2 1.4-5.4 5.2-5.400s6 2.2 5.2 5.400c-.1.4-.4.6-.8.600h-8.800c-.4 0-.7-.2-.8-.6z"/><path d="M21.8 258.200c-3.2-.6-5.6 1-5.8 3.4 0 .5.3.8.8.8h4.400M32.2 258.200c3.2-.6 5.6 1 5.8 3.4 0 .5-.3.8-.8.800h-4.4"/>
<!-- megaphone -->
<path d="M36.6 295.400v-9.200c-2.8 2.4-5.4 3.8-9.6 3.800h-7.800a2.4 2.4 0 0 0-2.4 2.400v1.600a2.4 2.4 0 0 0 2.4 2.400H28M20.8 290v6.400M21.8 296.600v6.200c0 .8.4 1.2 1.2 1.200h.8c.8 0 1.2-.4 1.2-1.200v-6.2"/>
<path d="M33.50 296.70L34.85 298.86L37.40 298.95L36.20 301.20L37.40 303.45L34.85 303.54L33.50 305.70L32.15 303.54L29.60 303.45L30.80 301.20L29.60 298.95L32.15 298.86Z" fill="#1c2b33" stroke="none"/><circle cx="33.5" cy="301.2" r="1.3" fill="#fff" stroke="none"/>
<!-- card -->
<rect x="16" y="328.4" width="22" height="14.8" rx="3"/><path d="M16 333.500h22" stroke-width="2.8" stroke-linecap="butt"/><path d="M18.8 340.300h3.600M25.6 340.300h6.2"/>
<!-- network -->
<circle cx="27" cy="370.6" r="5.9"/><circle cx="18.2" cy="380.8" r="2.2"/><circle cx="27" cy="384.4" r="2.2"/><circle cx="35.8" cy="380.8" r="2.2"/><path d="M27 376.600v5.500M22.8 375l-2.8 3.800M31.2 375l2.8 3.8" stroke-linecap="butt"/>
<!-- hamburger -->
<path d="M18.2 411h17.600M18.2 418.100h17.600M18.2 425.200h17.6" stroke="#3c474d" stroke-width="1.3"/>
<!-- divider -->
<path d="M15 612.300h24" stroke="#cfd5da" stroke-width="1" stroke-linecap="butt"/>
<!-- news -->
<rect x="21.2" y="671" width="15" height="16.4" rx="2.2"/><path d="M21.2 673.400c-2.6.8-3.4 2-3.4 4.400v5c0 2.8 1.2 4.4 4 4.600h2M24.8 681.400h8.200M24.8 684.200h8.2" stroke-width="1.4"/><circle cx="26.6" cy="676.2" r="1.9" fill="#1c2b33" stroke="none"/>
<!-- gear -->
<circle cx="27" cy="715" r="3.2"/>
<path d="M25.32 708.00L25.55 705.71L28.45 705.71L28.68 708.00L30.77 708.86L32.54 707.41L34.59 709.46L33.14 711.23L34.00 713.32L36.29 713.55L36.29 716.45L34.00 716.68L33.14 718.77L34.59 720.54L32.54 722.59L30.77 721.14L28.68 722.00L28.45 724.29L25.55 724.29L25.32 722.00L23.23 721.14L21.46 722.59L19.41 720.54L20.86 718.77L20.00 716.68L17.71 716.45L17.71 713.55L20.00 713.32L20.86 711.23L19.41 709.46L21.46 707.41L23.23 708.86Z" stroke-width="1.4"/>
<!-- bell -->
<path d="M27 742.600c-3.4 0-5.4 2.6-5.4 6v2.400c0 1.4-.6 2.6-1.6 3.800l-.8 1c-.5.7-.1 1.4.7 1.400h14.200c.8 0 1.2-.700.7-1.400l-.8-1c-1-1.2-1.6-2.4-1.6-3.800v-2.400c0-3.4-2-6-5.4-6zM24.8 757.400c.2 1.4 1 2.2 2.2 2.200s2-.8 2.2-2.2"/><circle cx="27" cy="742" r="1" />
<circle cx="39.8" cy="743" r="9.2" fill="#dc3a1f" stroke="#fff" stroke-width=".8"/>
<!-- search -->
<circle cx="24.8" cy="784.9" r="6.6" stroke-width="1.6"/><path d="M29.8 789.800l5.8 5.6" stroke-width="2"/>
<!-- bug -->
<ellipse cx="26.8" cy="823.8" rx="5.6" ry="8.3"/><path d="M21.8 819.400h10M26.8 819.400v12.600M23.4 815.800l-3-1.400M30.2 815.800l3-1.400M21.4 821.600l-3.2-2.400M21.2 825.200l-3.8 1.200M22 829.400l-2.6 2.800M32.2 821.600l3.2-2.400M32.4 825.200l3.8 1.200M31.6 829.400l2.6 2.8" stroke-width="1.4"/>
</svg>
<div class="t" id="s4" style="left:31.8px;top:736.8px;width:16px;text-align:center;font-size:12.5px;font-weight:bold;color:#fff">4</div>
</div>
</body>
</html>
